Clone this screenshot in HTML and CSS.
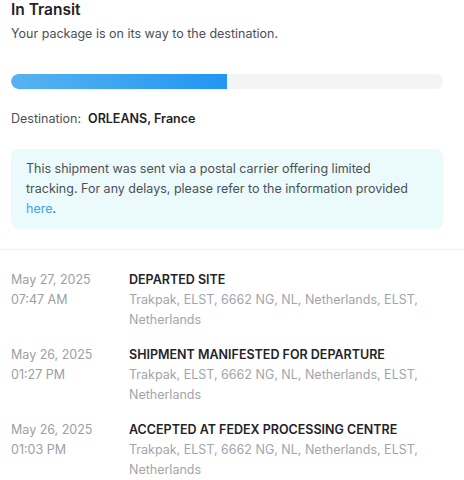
FILE: index.html
```html
<!DOCTYPE html>
<html>
<head>
<meta charset="utf-8">
<link rel="stylesheet" href="styles.css">
</head>
<body>
<div class="top">
  <h1 class="title">In Transit</h1>
  <p class="subtitle">Your package is on its way to the destination.</p>
  <div class="track"><div class="fill" style="width:50%"></div></div>
  <p class="dest"><span class="dest-label">Destination:</span><span class="dest-value">ORLEANS, France</span></p>
  <div class="notice">This shipment was sent via a postal carrier offering limited tracking. For any delays, please refer to the information provided <a class="link" href="#">here</a>.</div>
</div>
<div class="events">
  <div class="event">
    <div class="when"><div>May 27, 2025</div><div>07:47 AM</div></div>
    <div class="what"><div class="status">DEPARTED SITE</div><div class="loc">Trakpak, ELST, 6662 NG, NL, Netherlands, ELST, Netherlands</div></div>
  </div>
  <div class="event">
    <div class="when"><div>May 26, 2025</div><div>01:27 PM</div></div>
    <div class="what"><div class="status">SHIPMENT MANIFESTED FOR DEPARTURE</div><div class="loc">Trakpak, ELST, 6662 NG, NL, Netherlands, ELST, Netherlands</div></div>
  </div>
  <div class="event">
    <div class="when"><div>May 26, 2025</div><div>01:03 PM</div></div>
    <div class="what"><div class="status">ACCEPTED AT FEDEX PROCESSING CENTRE</div><div class="loc">Trakpak, ELST, 6662 NG, NL, Netherlands, ELST, Netherlands</div></div>
  </div>
</div>
</body>
</html>
```
FILE: styles.css
```css
* { box-sizing: border-box; }
html, body { margin: 0; padding: 0; background: #fff; }
body {
  font-family: "Inter", "Liberation Sans", sans-serif;
  font-size: 12.5px;
  line-height: 20px;
  color: #4b5563;
  width: 464px;
}
.top { padding: 0 21px 20px 11px; border-bottom: 1px solid #f1f1f2; }
.title { margin: 0; font-size: 15.5px; line-height: 20px; font-weight: 600; color: #1f2328; }
.subtitle { margin: 4px 0 0; color: #4b5058; }
.track {
  margin-top: 30px;
  height: 15px;
  border-radius: 8px;
  background: #f3f4f6;
  overflow: hidden;
}
.fill { height: 100%; background: linear-gradient(90deg, #58b3ef, #2196f3); border-radius: 8px 0 0 8px; }
.dest { margin: 20px 0 0; color: #4b5058; }
.dest-value { margin-left: 7px; font-weight: 600; color: #1f2328; }
.notice {
  margin-top: 20px;
  background: #ebfafa;
  border-radius: 8px;
  padding: 10px 34px 10px 15px;
  color: #4b5058;
}
.link { color: #3fa0ef; text-decoration: none; }
.events { padding: 20px 11px 0; display: flex; flex-direction: column; gap: 15px; }
.event { display: flex; }
.when { width: 118px; flex: none; color: #9ba0a6; }
.what { flex: 1; padding-right: 20px; }
.status { font-weight: 600; color: #1f2328; }
.loc { color: #a1a5ab; }
```
